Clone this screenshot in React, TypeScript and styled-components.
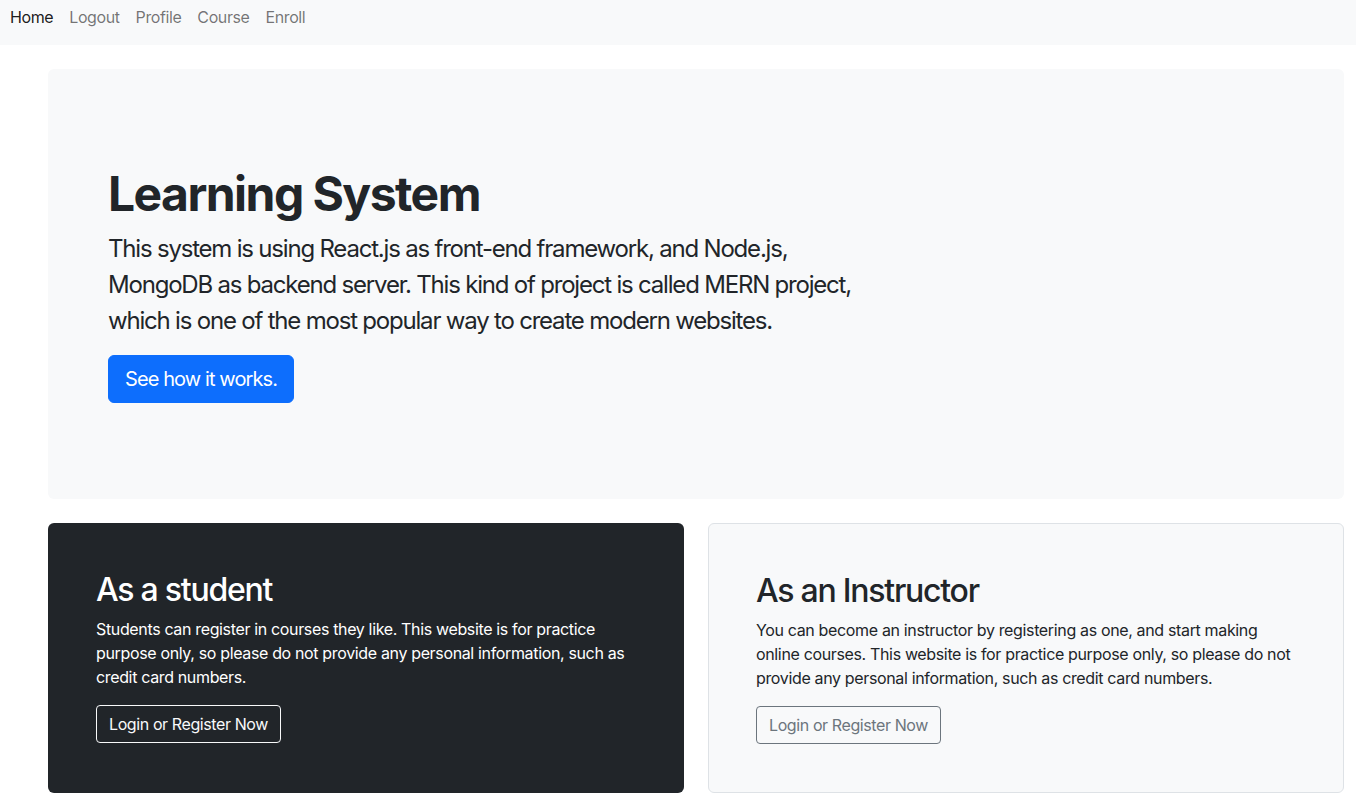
import React from "react";
import styled, { createGlobalStyle } from "styled-components";

const Global = createGlobalStyle`
  * { box-sizing: border-box; }
  body {
    margin: 0;
    background: #fff;
    color: #212529;
    font-family: Inter, "Noto Sans", "Liberation Sans", sans-serif;
    font-size: 16px;
    line-height: 1.5;
  }
`;

const Nav = styled.nav`
  height: 45px;
  background: #f8f9fa;
  display: flex;
  align-items: flex-start;
  padding: 5px 10px 0;
  gap: 16px;
`;

const NavLink = styled.a<{ $active?: boolean }>`
  font-size: 16px;
  line-height: 24px;
  letter-spacing: -0.4px;
  color: ${(p) => (p.$active ? "rgba(0,0,0,0.9)" : "rgba(0,0,0,0.55)")};
  text-decoration: none;
  cursor: pointer;
`;

const Main = styled.main`
  padding: 24px 12px 0 48px;
`;

const Hero = styled.section`
  background: #f8f9fa;
  border-radius: 6px;
  padding: 96px 60px;
  margin-bottom: 24px;
`;

const HeroTitle = styled.h1`
  margin: 0 0 8px;
  font-size: 48px;
  line-height: 1.2;
  font-weight: 700;
  letter-spacing: -1.55px;
`;

const HeroText = styled.p`
  margin: 0 0 16px;
  width: 766px;
  font-size: 24px;
  line-height: 36px;
  letter-spacing: -1.2px;
`;

const PrimaryButton = styled.button`
  font-family: inherit;
  font-size: 20px;
  line-height: 30px;
  padding: 8px 16px;
  border-radius: 6px;
  border: 1px solid #0d6efd;
  background: #0d6efd;
  color: #fff;
  letter-spacing: -0.9px;
  cursor: pointer;
`;

const Row = styled.div`
  display: grid;
  grid-template-columns: 1fr 1fr;
  gap: 24px;
`;

const Card = styled.div<{ $dark?: boolean }>`
  border-radius: 6px;
  padding: ${(p) => (p.$dark ? "48px" : "48px 47px")};
  background: ${(p) => (p.$dark ? "#212529" : "#f8f9fa")};
  color: ${(p) => (p.$dark ? "#fff" : "#212529")};
  border: ${(p) => (p.$dark ? "none" : "1px solid #dee2e6")};
`;

const CardTitle = styled.h2`
  margin: 0 0 8px;
  font-size: 32px;
  line-height: 1.2;
  font-weight: 500;
  letter-spacing: -1.25px;
`;

const CardText = styled.p`
  margin: 0 0 16px;
  font-size: 16px;
  line-height: 24px;
  letter-spacing: -0.35px;
`;

const OutlineButton = styled.button<{ $light?: boolean }>`
  font-family: inherit;
  font-size: 16px;
  line-height: 24px;
  padding: 6px 12px;
  border-radius: 4px;
  background: transparent;
  border: 1px solid ${(p) => (p.$light ? "#f8f9fa" : "#6c757d")};
  color: ${(p) => (p.$light ? "#f8f9fa" : "#6c757d")};
  letter-spacing: -0.4px;
  cursor: pointer;
`;

export default function App() {
  return (
    <>
      <Global />
      <Nav>
        <NavLink $active>Home</NavLink>
        <NavLink>Logout</NavLink>
        <NavLink>Profile</NavLink>
        <NavLink>Course</NavLink>
        <NavLink>Enroll</NavLink>
      </Nav>
      <Main>
        <Hero>
          <HeroTitle>Learning System</HeroTitle>
          <HeroText>
            This system is using React.js as front-end framework, and Node.js,
            MongoDB as backend server. This kind of project is called MERN
            project, which is one of the most popular way to create modern
            websites.
          </HeroText>
          <PrimaryButton>See how it works.</PrimaryButton>
        </Hero>
        <Row>
          <Card $dark>
            <CardTitle>As a student</CardTitle>
            <CardText>
              Students can register in courses they like. This website is for
              practice purpose only, so please do not provide any personal
              information, such as credit card numbers.
            </CardText>
            <OutlineButton $light>Login or Register Now</OutlineButton>
          </Card>
          <Card>
            <CardTitle>As an Instructor</CardTitle>
            <CardText>
              You can become an instructor by registering as one, and start
              making online courses. This website is for practice purpose only,
              so please do not provide any personal information, such as credit
              card numbers.
            </CardText>
            <OutlineButton>Login or Register Now</OutlineButton>
          </Card>
        </Row>
      </Main>
    </>
  );
}
